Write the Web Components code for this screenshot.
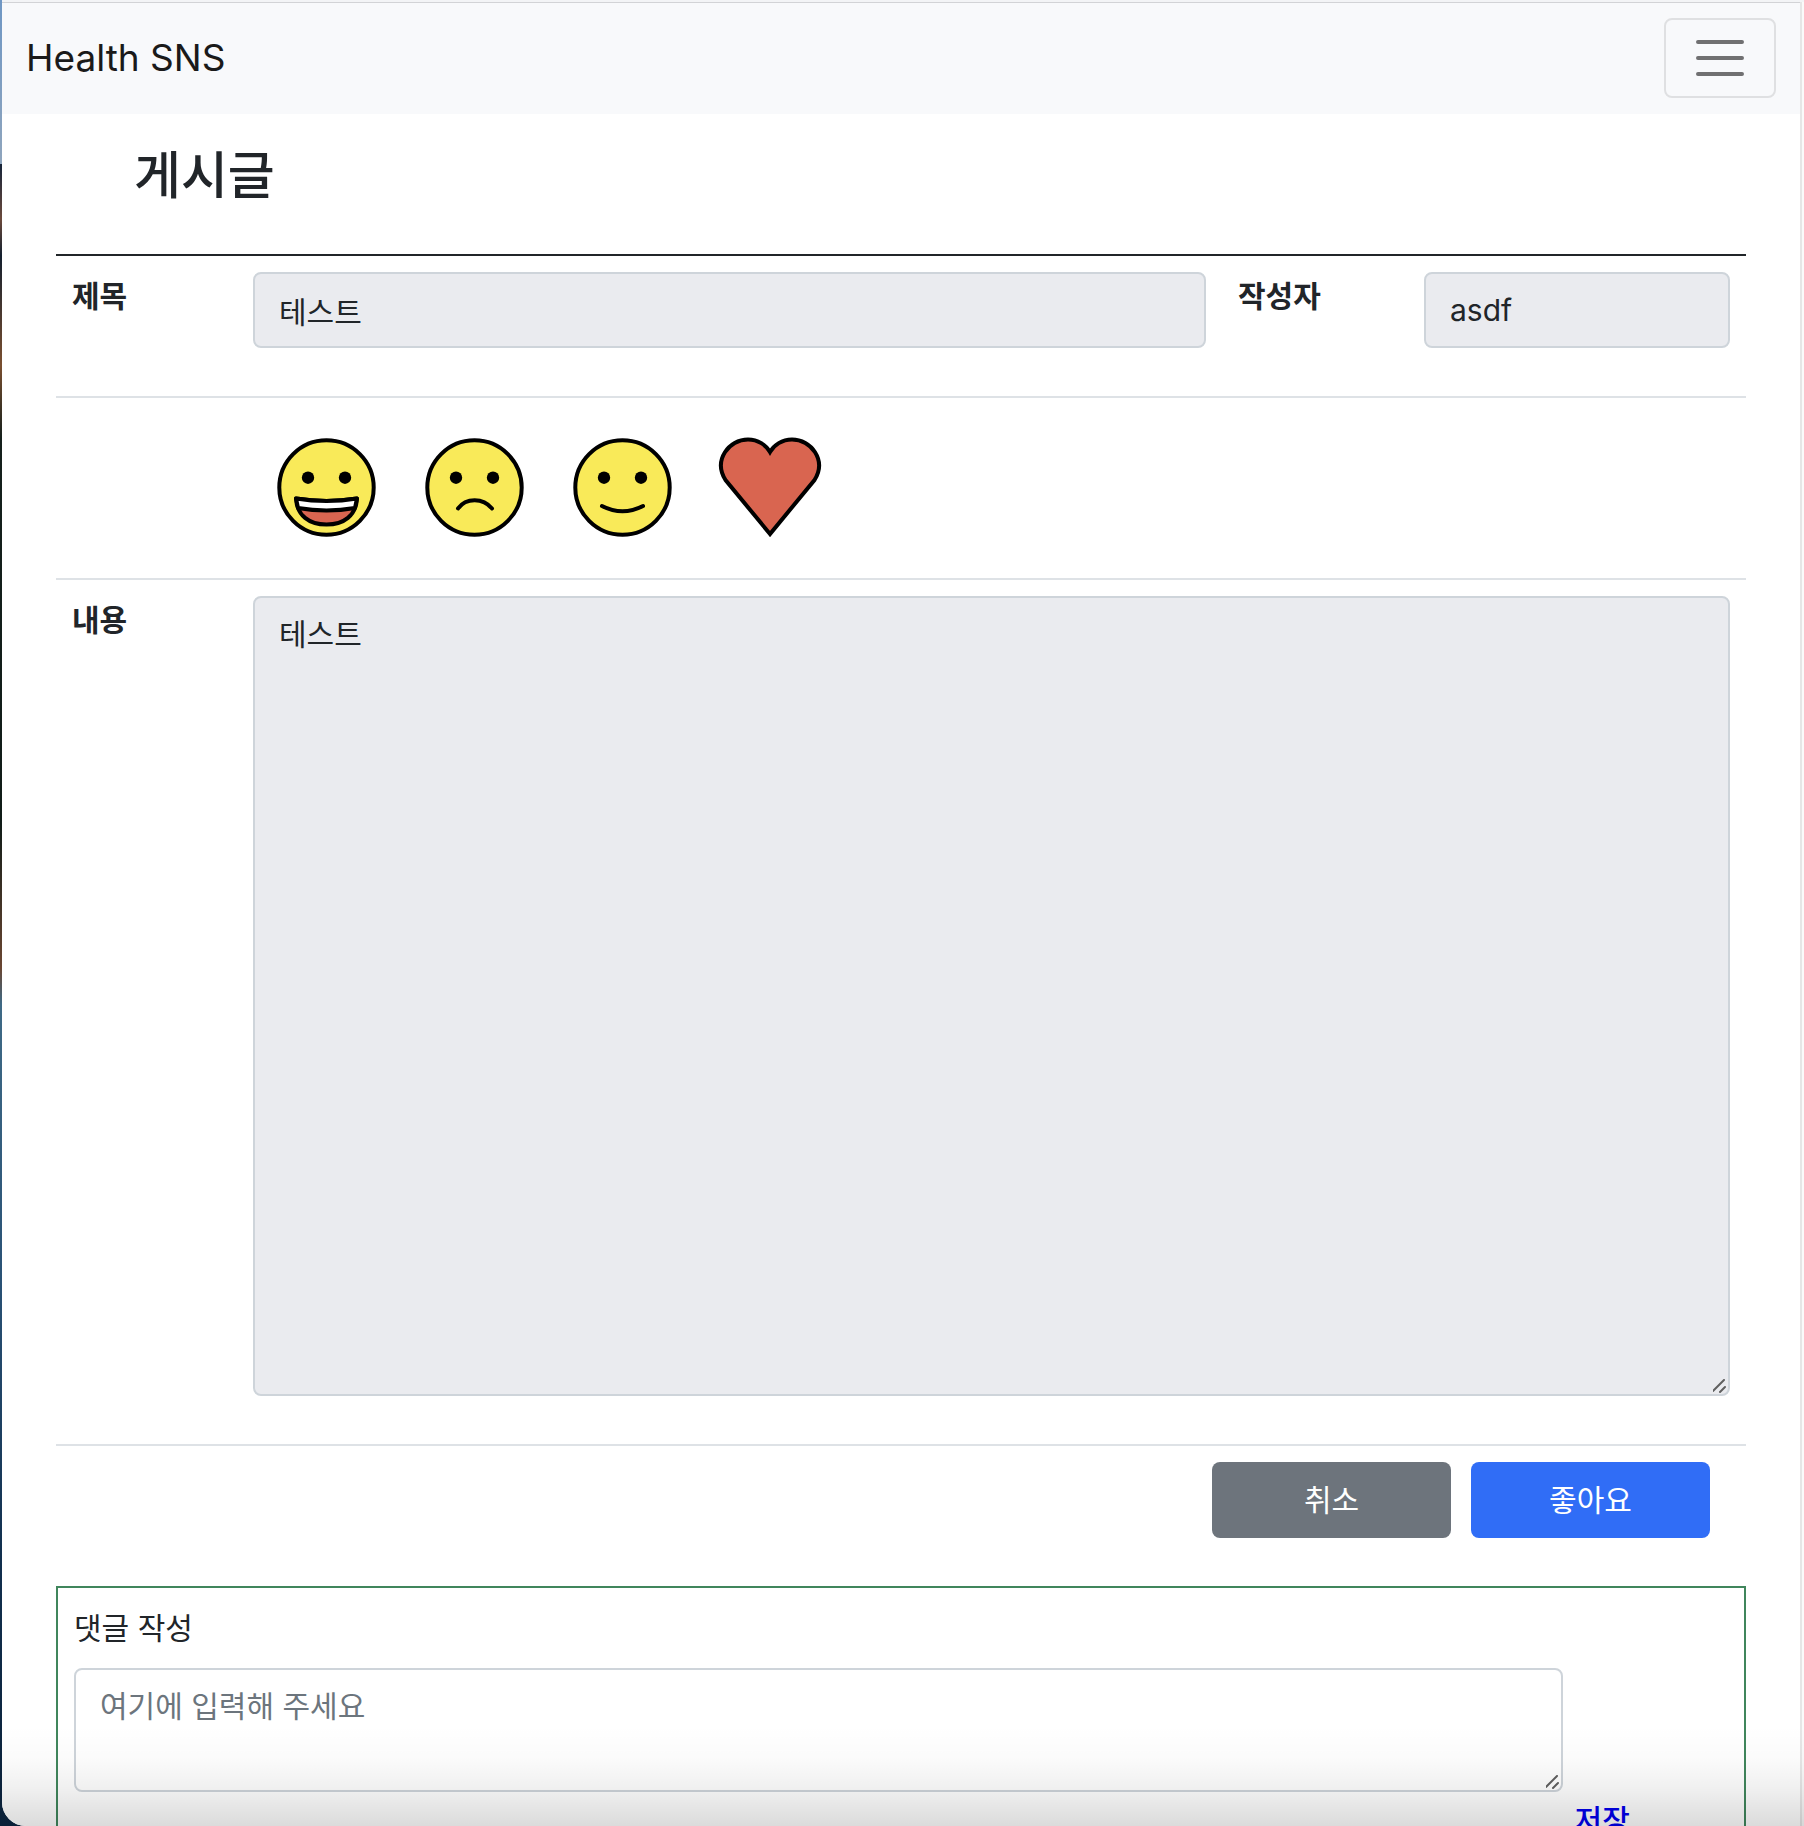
<!DOCTYPE html>
<html lang="ko">
<head>
<meta charset="utf-8">
<title>Health SNS</title>
<style>
  html, body { margin: 0; height: 100%; }
  body {
    overflow: hidden;
    color: #212529;
    font: 400 30px/48px Inter, "Noto Sans CJK KR", sans-serif;
    background: linear-gradient(#6f97c4 0, #8fa5bd 9%, #17253a 9%, #6b4a3c 12%, #14202f 14%, #7a4f30 20%, #15201c 24%, #101c18 45%, #6a4632 53%, #3f6a86 55%, #2a5276 70%, #12304f 85%, #0a2038 100%);
  }
</style>
</head>
<body>
<app-window>
  <nav-bar slot="bar">Health SNS</nav-bar>
  <post-detail>
    <span slot="heading">게시글</span>
  </post-detail>
  <comment-form></comment-form>
</app-window>

<script>
const fieldStyles = `
  *, *::before, *::after { box-sizing: border-box; }
  input, textarea {
    display: block;
    width: 100%;
    margin: 0;
    padding: 12px 24px;
    border: 2px solid #ced4da;
    border-radius: 8px;
    background: #fff;
    color: inherit;
    font: inherit;
    line-height: 48px;
    outline: 0;
  }
  input { height: 76px; }
  input:read-only, textarea:read-only { background: #eaebef; }
  textarea { resize: vertical; overflow: auto; }
  textarea::placeholder { color: #6c757d; }
  textarea::-webkit-resizer {
    background: url("data:image/svg+xml,%3Csvg xmlns='http://www.w3.org/2000/svg' width='15' height='15'%3E%3Cpath d='M0 12 11 1M7 13l5-5' stroke='%23606060' stroke-width='2' stroke-linecap='round'/%3E%3C/svg%3E") no-repeat;
  }
`;

function define(name, html, styles) {
  const template = document.createElement('template');
  template.innerHTML = `<style>${styles}</style>${html}`;
  customElements.define(name, class extends HTMLElement {
    constructor() {
      super();
      this.attachShadow({ mode: 'open' }).append(template.content.cloneNode(true));
    }
  });
}

define('app-window', `
  <slot name="bar"></slot>
  <main><slot></slot></main>
  <div class="shade"></div>
`, `
  :host {
    display: flex;
    flex-direction: column;
    box-sizing: border-box;
    position: relative;
    height: 100vh;
    margin-left: 2px;
    padding-right: 2px;
    overflow: hidden;
    border-top: 2px solid #f3f4f6;
    border-bottom-left-radius: 24px;
    background: #fafafa;
  }
  main {
    flex: 1 0 auto;
    padding: 0 3%;
    border-right: 2px solid #e6e6e6;
    background: #fff;
  }
  .shade {
    position: absolute;
    inset: auto 0 0 0;
    height: 100px;
    pointer-events: none;
    background: linear-gradient(rgba(0,0,0,0), rgba(0,0,0,.02) 35%, rgba(0,0,0,.06) 62%, rgba(0,0,0,.14));
  }
`);

define('nav-bar', `
  <nav>
    <a href="#"><slot></slot></a>
    <button type="button" aria-label="메뉴">
      <svg viewBox="0 0 60 60" width="60" height="60" aria-hidden="true">
        <path d="M8 14h44M8 30h44M8 46h44" stroke="#707071" stroke-width="4" stroke-linecap="round"/>
      </svg>
    </button>
  </nav>
`, `
  :host { display: block; border-right: 2px solid #e6e6e6; background: #f8f9fb; box-shadow: inset 0 1px #d2d3d6; }
  nav { display: flex; align-items: center; justify-content: space-between; padding: 16px 24px; }
  a { color: #1a1a1a; font-size: 37px; line-height: 60px; text-decoration: none; }
  button {
    display: flex; align-items: center; justify-content: center;
    width: 112px; height: 80px; padding: 0;
    border: 2px solid #dfe0e2; border-radius: 8px; background: none;
  }
`);

const ink = 'stroke="#000" stroke-width="4" stroke-linecap="round" stroke-linejoin="round"';
const face = `<circle cx="73.500" cy="73.500" r="47.200" fill="#f9ea59" ${ink}/>
  <circle cx="55" cy="63.700" r="6.200"/><circle cx="92" cy="63.700" r="6.200"/>`;
const drawings = {
  grin: `${face}
    <path d="M43 84.500q30.500 5 61 0c-1 17-13 26-30.500 26s-29.500-9-30.500-26z" fill="#d96550" ${ink}/>
    <path d="M43 84.500q30.500 5 61 0l-2 9.500q-28.500 5-57 0z" fill="#fff" ${ink}/>`,
  frown: `${face}<path d="M57 94.500C65 83.500 82 83.500 91 94.500" fill="none" ${ink}/>`,
  smile: `${face}<path d="M53 92q20.500 10.500 41 0" fill="none" ${ink}/>`,
  heart: `<path d="M73 120 28.500 66C16 46 32 25.500 51 25.500 61 25.500 69 31 73 38 77 31 85 25.500 95 25.500 114 25.500 130 46 117.500 66Z" fill="#d96550" ${ink} style="stroke-linejoin:miter"/>`
};
customElements.define('reaction-icon', class extends HTMLElement {
  connectedCallback() {
    const root = this.attachShadow({ mode: 'open' });
    root.innerHTML = `
      <style>
        :host { display: block; }
        button { display: block; padding: 0; border: 0; background: none; }
        svg { display: block; }
      </style>
      <button type="button" aria-label="${this.getAttribute('label')}">
        <svg viewBox="0 0 148 148" width="148" height="148" aria-hidden="true">${drawings[this.getAttribute('kind')]}</svg>
      </button>`;
  }
});

define('action-button', `<button type="button"><slot></slot></button>`, `
  :host { display: block; width: 239px; }
  button {
    display: block; width: 100%; height: 76px; padding: 12px 24px;
    border: 0; border-radius: 8px;
    background: var(--tone, #6d747c); color: #fff; font: inherit;
  }
`);

define('post-detail', `
  <h2><slot name="heading"></slot></h2>
  <table>
    <colgroup><col class="label"><col><col class="by"><col class="author"></colgroup>
    <tbody>
      <tr>
        <th scope="row"><label for="title">제목</label></th>
        <td><input id="title" type="text" value="테스트" readonly></td>
        <th scope="row"><label for="author">작성자</label></th>
        <td><input id="author" type="text" value="asdf" readonly></td>
      </tr>
      <tr class="reactions">
        <td></td>
        <td colspan="3">
          <div class="icons">
            <reaction-icon kind="grin" label="기뻐요"></reaction-icon>
            <reaction-icon kind="frown" label="슬퍼요"></reaction-icon>
            <reaction-icon kind="smile" label="좋아요"></reaction-icon>
            <reaction-icon kind="heart" label="사랑해요"></reaction-icon>
          </div>
        </td>
      </tr>
      <tr>
        <th scope="row"><label for="content">내용</label></th>
        <td colspan="3"><textarea id="content" readonly>테스트</textarea></td>
      </tr>
    </tbody>
  </table>
  <div class="actions">
    <action-button>취소</action-button>
    <action-button style="--tone:#306df6">좋아요</action-button>
  </div>
`, `${fieldStyles}
  :host { display: block; }
  h2 { margin: 0; padding: 32px 78px 48px; font-size: 51px; line-height: 60px; font-weight: 500; }
  table {
    width: 100%; table-layout: fixed; border-collapse: separate; border-spacing: 0;
    border-top: 2px solid #212529;
  }
  .label { width: 181px; }
  .by { width: 186px; }
  .author { width: 338px; }
  th, td { padding: 16px 16px 48px; border-bottom: 2px solid #dee2e6; text-align: left; vertical-align: top; }
  th { font-weight: 700; }
  .reactions td { padding: 16px; }
  .icons { display: flex; }
  #content { height: 800px; }
  .actions { display: flex; justify-content: flex-end; gap: 20px; padding: 16px 36px 48px; }
`);

define('comment-form', `
  <form>
    <label for="comment">댓글 작성</label>
    <div class="row">
      <textarea id="comment" placeholder="여기에 입력해 주세요"></textarea>
      <a href="#">저장</a>
    </div>
  </form>
`, `${fieldStyles}
  :host { display: block; }
  form { padding: 16px; border: 2px solid #40865c; }
  label { display: block; margin-bottom: 16px; }
  .row { display: grid; grid-template-columns: 9fr 1fr; row-gap: 4px; }
  #comment { height: 124px; }
  a { grid-area: 2 / 2; padding-left: 12px; color: #0000ee; font-weight: 500; text-decoration: none; }
`);
</script>
</body>
</html>
